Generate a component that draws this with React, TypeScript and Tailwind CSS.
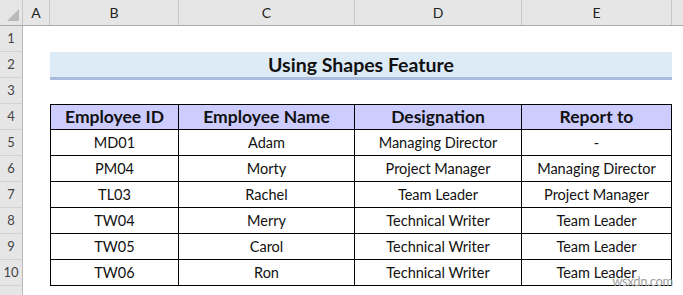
const cols = [
  { key: "A", w: "w-[27px]" },
  { key: "B", w: "w-[129px]" },
  { key: "C", w: "w-[176px]" },
  { key: "D", w: "w-[167px]" },
  { key: "E", w: "w-[150px]" },
];

const head = ["Employee ID", "Employee Name", "Designation", "Report to"];

const rows = [
  ["MD01", "Adam", "Managing Director", "-"],
  ["PM04", "Morty", "Project Manager", "Managing Director"],
  ["TL03", "Rachel", "Team Leader", "Project Manager"],
  ["TW04", "Merry", "Technical Writer", "Team Leader"],
  ["TW05", "Carol", "Technical Writer", "Team Leader"],
  ["TW06", "Ron", "Technical Writer", "Team Leader"],
];

const widths = ["w-[129px]", "w-[176px]", "w-[167px]", "w-[150px]"];

function RowHead({ n }: { n?: number }) {
  return (
    <div className="w-[23px] h-[26px] shrink-0 bg-[#e6e6e6] border-r border-b border-r-[#b8b8b8] border-b-[#d2d2d2] flex items-center justify-center text-[13px] text-[#444]">
      {n}
    </div>
  );
}

export default function App() {
  return (
    <div
      className="relative w-[683px] h-[295px] overflow-hidden bg-white text-[#111]"
      style={{ fontFamily: "Lato, 'Open Sans', sans-serif" }}
    >
      {/* column headers */}
      <div className="flex h-[26px] bg-[#e6e6e6] border-b border-[#ababab]">
        <div className="w-[23px] shrink-0 border-r border-[#c8c8c8] relative">
          <div className="absolute right-[3px] bottom-[4px] w-0 h-0 border-l-[12px] border-l-transparent border-b-[12px] border-b-[#b9b9b9]" />
        </div>
        {cols.map((c) => (
          <div
            key={c.key}
            className={`${c.w} shrink-0 border-r border-[#c8c8c8] flex items-center justify-center text-[14px] text-[#222]`}
          >
            {c.key}
          </div>
        ))}
        <div className="flex-1" />
      </div>

      {/* row 1 */}
      <div className="flex">
        <RowHead n={1} />
      </div>

      {/* row 2 title */}
      <div className="flex">
        <RowHead n={2} />
        <div className="w-[27px] shrink-0" />
        <div className="w-[622px] h-[28px] shrink-0 bg-[#ddebf7] border-b-[3px] border-[#a9bbdd] flex items-center justify-center text-[19.5px] font-bold relative z-10 pt-[1px]">
          Using Shapes Feature
        </div>
      </div>

      {/* row 3 */}
      <div className="flex -mt-[2px]">
        <RowHead n={3} />
      </div>

      {/* row 4 header */}
      <div className="flex">
        <RowHead n={4} />
        <div className="w-[27px] shrink-0" />
        {head.map((h, i) => (
          <div
            key={h}
            className={`${widths[i]} h-[26px] shrink-0 bg-[#ccccff] border-t border-b border-r border-black ${i === 0 ? "border-l" : ""} flex items-center justify-center text-[17.5px] font-bold`}
          >
            {h}
          </div>
        ))}
      </div>

      {rows.map((r, ri) => (
        <div className="flex" key={ri}>
          <RowHead n={ri + 5} />
          <div className="w-[27px] shrink-0" />
          {r.map((v, i) => (
            <div
              key={i}
              className={`${widths[i]} h-[26px] shrink-0 border-b border-r border-black ${i === 0 ? "border-l" : ""} flex items-center justify-center text-[14.5px]`}
            >
              {v}
            </div>
          ))}
        </div>
      ))}

      <div className="flex">
        <RowHead />
      </div>

      <div className="absolute right-[10px] bottom-[4px] text-[13px] text-[#a0a0a0] tracking-tight">
        wsxdn.com
      </div>
    </div>
  );
}
